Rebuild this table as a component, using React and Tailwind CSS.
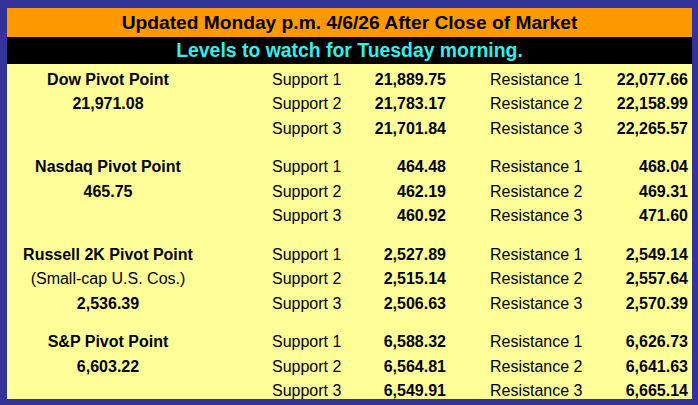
const groups = [
  {
    left: [
      { text: "Dow Pivot Point", bold: true },
      { text: "21,971.08", bold: true },
      { text: "" },
    ],
    rows: [
      ["Support 1", "21,889.75", "Resistance 1", "22,077.66"],
      ["Support 2", "21,783.17", "Resistance 2", "22,158.99"],
      ["Support 3", "21,701.84", "Resistance 3", "22,265.57"],
    ],
  },
  {
    left: [
      { text: "Nasdaq Pivot Point", bold: true },
      { text: "465.75", bold: true },
      { text: "" },
    ],
    rows: [
      ["Support 1", "464.48", "Resistance 1", "468.04"],
      ["Support 2", "462.19", "Resistance 2", "469.31"],
      ["Support 3", "460.92", "Resistance 3", "471.60"],
    ],
  },
  {
    left: [
      { text: "Russell 2K Pivot Point", bold: true },
      { text: "(Small-cap U.S. Cos.)", bold: false },
      { text: "2,536.39", bold: true },
    ],
    rows: [
      ["Support 1", "2,527.89", "Resistance 1", "2,549.14"],
      ["Support 2", "2,515.14", "Resistance 2", "2,557.64"],
      ["Support 3", "2,506.63", "Resistance 3", "2,570.39"],
    ],
  },
  {
    left: [
      { text: "S&P Pivot Point", bold: true },
      { text: "6,603.22", bold: true },
      { text: "" },
    ],
    rows: [
      ["Support 1", "6,588.32", "Resistance 1", "6,626.73"],
      ["Support 2", "6,564.81", "Resistance 2", "6,641.63"],
      ["Support 3", "6,549.91", "Resistance 3", "6,665.14"],
    ],
  },
];

export default function App() {
  return (
    <div
      className="w-[698px] h-[405px] overflow-hidden bg-[#333399] border-t-[8px] border-l-[7px] border-r-[6px] border-b-[6px] border-[#333399] text-black"
      style={{ fontFamily: '"Liberation Sans", Arial, sans-serif' }}
    >
      <div className="h-[29px] bg-[#ff9900] flex items-center justify-center text-[19.2px] font-bold leading-none">
        Updated Monday p.m. 4/6/26 After Close of Market
      </div>
      <div className="h-[26.5px] bg-black flex items-center justify-center text-[19.4px] font-bold leading-none text-[#33eeee]">
        Levels to watch for Tuesday morning.
      </div>
      <div className="h-[335.5px] overflow-hidden bg-[#ffff99] pt-[4px] text-[16px]">
        {groups.map((g, gi) => (
          <div key={gi} className={gi > 0 ? "pt-[14px]" : ""}>
            {g.rows.map((r, ri) => (
              <div
                key={ri}
                className="grid grid-cols-[265px_80px_94px_140px_102px_1fr] h-[24.5px] items-center leading-[24px]"
              >
                <div className={`w-[202px] text-center ${g.left[ri].bold ? "font-bold" : ""}`}>
                  {g.left[ri].text}
                </div>
                <div>{r[0]}</div>
                <div className="text-right font-bold">{r[1]}</div>
                <div className="pl-[44px]">{r[2]}</div>
                <div className="text-right font-bold">{r[3]}</div>
                <div />
              </div>
            ))}
          </div>
        ))}
      </div>
    </div>
  );
}
